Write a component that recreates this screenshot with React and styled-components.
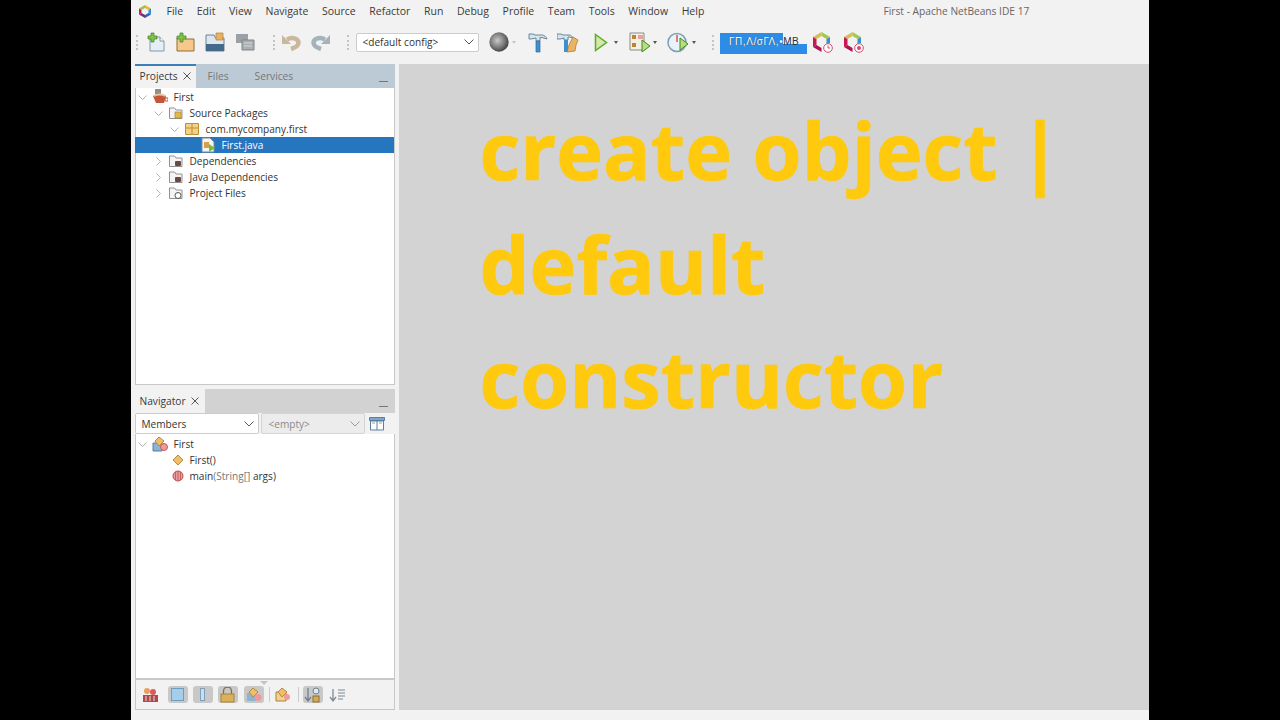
import React from 'react';
import styled, { createGlobalStyle } from 'styled-components';

const Global = createGlobalStyle`
  html, body { margin: 0; padding: 0; background: #000; height: 720px; overflow: hidden; }
  #root { height: 720px; }
`;
const Stage = styled.div`
  width: 1280px; height: 720px; background: #000; display: flex; justify-content: center;
`;
const Win = styled.div`
  width: 1018px; margin-left: -1px; height: 720px; background: #f2f2f2; display: flex; flex-direction: column;
  font-family: "Open Sans", "Noto Sans", sans-serif; font-size: 10.1px; color: #333;
`;
const TitleBar = styled.div`
  height: 22px; display: flex; align-items: center; position: relative; padding-left: 7px;
`;
const Menu = styled.div`display: flex; margin-left: 15px; gap: 13.6px;`;
const MenuItem = styled.span`font-size: 10.5px; color: #3a3a3a;`;
const WinTitle = styled.span`position: absolute; left: 753px; font-size: 10.2px; color: #666; top: 4px;`;
const ToolBar = styled.div`
  height: 42px; box-sizing: border-box; padding: 0 0 2px 5px; display: flex; align-items: center;
`;
const Grip = styled.div`
  width: 1px; height: 15px; flex: none; margin: 0 ${p => p.$r ?? 0}px 0 ${p => p.$l ?? 0}px; border-left: 2px dotted #c4c4c4;
`;
const Ico = styled.svg`flex: none; display: block; margin-left: ${p => p.$ml || 0}px;`;
const Drop = styled.span`
  width: 0; height: 0; flex: none; margin-left: ${p => p.$ml ?? 5}px;
  border-left: 2.5px solid transparent; border-right: 2.5px solid transparent; border-top: 3px solid ${p => p.$c || '#555'};
`;
const Config = styled.div`
  width: 123px; height: 19px; box-sizing: border-box; background: #fff; border: 1px solid #ccc; border-radius: 2px;
  display: flex; align-items: center; justify-content: space-between; padding: 0 4px 0 6px; font-size: 10.1px; color: #333; flex: none;
`;
const Mem = styled.div`
  width: 87px; height: 21px; margin-top: 3px; flex: none; box-sizing: border-box; padding: 1px 0 0 9px; color: #fff; line-height: 16px;
  font-family: "Liberation Sans", sans-serif; font-size: 10px; letter-spacing: 0.55px; white-space: nowrap;
  text-shadow: 0 0 1px #234;
  background:
    linear-gradient(#2f8ce6, #2f8ce6) left top / 63px 100% no-repeat,
    linear-gradient(#2f8ce6, #2f8ce6) left bottom / 100% 10px no-repeat;
`;
const MemDark = styled.span`color: #27323c; text-shadow: none;`;
const Body = styled.div`flex: 1; display: flex; padding: 0 0 10px 4px; min-height: 0; gap: 4px; background: #f2f2f2;`;
const Left = styled.div`width: 260px; flex: none; display: flex; flex-direction: column; gap: 4px;`;
const Panel = styled.div`
  display: flex; flex-direction: column; flex: ${p => p.$grow}; min-height: 0;
`;
const TabBar = styled.div`
  height: 24px; flex: none; display: flex; background: ${p => p.$bg}; position: relative;
`;
const Tab = styled.div`
  height: 100%; box-sizing: border-box; display: flex; align-items: center; gap: 5px; padding: 0 ${p => p.$pr ?? 5}px ${p => p.$blue ? 2 : 0}px ${p => p.$pl ?? 5}px;
  font-size: 10.2px; color: #3a3a3a;
  background: ${p => p.$active ? '#f2f2f2' : 'transparent'};
  border-top: ${p => p.$blue ? '2px solid #3d80b8' : 'none'};
`;
const Minimize = styled.span`position: absolute; right: 7px; bottom: 6px; width: 9px; height: 1px; background: #777;`;
const TreeBox = styled.div`
  flex: 1; background: #fff; border: 1px solid #c8c8c8; border-top: none; min-height: 0; padding-top: 1px;
`;
const Row = styled.div`
  height: 16px; display: flex; align-items: center; padding-left: ${p => p.$pad}px; font-size: 10.1px;
  color: ${p => p.$sel ? '#fff' : '#333'}; background: ${p => p.$sel ? '#2675bf' : 'transparent'};
  margin-left: ${p => p.$sel ? -1 : 0}px;
`;
const Twist = styled.svg`width: 9px; height: 9px; flex: none; margin-right: 5px;`;
const RowIcon = styled.svg`width: 16px; height: 16px; flex: none; margin-right: ${p => p.$mr ?? 6}px;`;
const Faded = styled.span`color: #777;`;
const Combos = styled.div`display: flex; height: 21px; align-items: center; gap: 2px; background: #f2f2f2; flex: none;`;
const Combo = styled.div`
  height: 21px; width: ${p => p.$w}px; box-sizing: border-box; flex: none; border: 1px solid ${p => p.$off ? '#d4d4d4' : '#ccc'};
  background: ${p => p.$off ? '#ececec' : '#fff'}; color: ${p => p.$off ? '#8a8a8a' : '#333'}; border-radius: 2px;
  display: flex; align-items: center; justify-content: space-between; padding: 0 4px 0 ${p => p.$off ? 7 : 6}px; font-size: 10.1px;
`;
const NavBox = styled(TreeBox)`padding-top: 2px;`;
const Bottom = styled.div`
  height: 29px; flex: none; background: #f2f2f2; border: 1px solid #c8c8c8; display: flex; align-items: center; padding-left: 5px; position: relative;
`;
const Notch = styled.span`
  position: absolute; top: 1px; left: 124px; border-left: 4px solid transparent; border-right: 4px solid transparent; border-top: 4px solid #c4c4c4;
`;
const FilterBtn = styled.div`
  width: 20px; height: 17px; margin-right: ${p => p.$mr ?? 5}px; flex: none; display: flex; align-items: center; justify-content: center; border-radius: 3px;
  background: ${p => p.$on ? '#c8c8c8' : 'transparent'};
`;
const Sep = styled.div`width: 1px; height: 15px; background: #ccc; margin-right: ${p => p.$mr}px; flex: none;`;
const Editor = styled.div`
  flex: 1; background: #d3d3d3; padding: 28px 60px 0 81px; min-width: 0;
`;
const Headline = styled.h1`
  margin: 0; font-family: "Open Sans", "Noto Sans", sans-serif; font-weight: 700; font-size: 79.2px; line-height: 114px; color: #ffc90e;
  -webkit-text-stroke: 0.7px #ffc90e;
`;

const Chev = ({ open, c = '#a8a8a8' }) => (
  <Twist viewBox="0 0 9 9">
    <path d={open ? 'M0.5 2.5 L4.5 6.5 L8.5 2.5' : 'M2.5 0.5 L6.5 4.5 L2.5 8.5'} fill="none" stroke={c} strokeWidth="0.9" />
  </Twist>
);
const ComboChev = ({ c = '#555' }) => (
  <svg width="10" height="6" viewBox="0 0 10 6"><path d="M0.5 0.5 L5 5 L9.5 0.5" fill="none" stroke={c} strokeWidth="1" /></svg>
);
const Folder = ({ badge }) => (
  <RowIcon viewBox="0 0 16 16">
    <path d="M1.500 3h5l1.500 2h6v8.500h-12.500z" fill="#f4f4f4" stroke="#8d9297" strokeWidth="1" />
    {badge}
  </RowIcon>
);
const BadgeCube = ({ children }) => (
  <Ico $ml={0} width="22" height="22" viewBox="0 0 22 22">
    <path d="M10.500 1L19 6l-3.500 2-5-3z" fill="#a5c84f" />
    <path d="M2 6l8.500-5v4l-5 3z" fill="#d3bf58" />
    <path d="M2 6v10l3.500-2V8z" fill="#c7184f" />
    <path d="M2 16l8.500 5v-4l-5-3z" fill="#a8174e" />
    <path d="M19 6v6l-3.500 1V8z" fill="#3d8fd0" />
    {children}
  </Ico>
);
const Cross = () => (
  <svg width="8" height="8" viewBox="0 0 8 8"><path d="M.5.5l7 7M7.500.5l-7 7" stroke="#555" strokeWidth="1" /></svg>
);

export default function App() {
  const menus = ['File','Edit','View','Navigate','Source','Refactor','Run','Debug','Profile','Team','Tools','Window','Help'];
  return (
    <Stage>
      <Global />
      <Win>
        <TitleBar>
          <Ico width="14" height="15" viewBox="0 0 14 15">
            <path d="M7 1L13 4.500 10.500 6 7 4z" fill="#e8b52c" />
            <path d="M1 4.500L7 1V4L3.500 6z" fill="#9cc24c" />
            <path d="M1 4.500V10.500L3.500 9V6z" fill="#c7184f" />
            <path d="M1 10.500L7 14V11L3.500 9z" fill="#7b2c80" />
            <path d="M13 4.500V10.500L10.500 9V6z" fill="#2a8fd9" />
            <path d="M13 10.500L7 14V11L10.500 9z" fill="#2a66b8" />
          </Ico>
          <Menu>{menus.map(m => <MenuItem key={m}>{m}</MenuItem>)}</Menu>
          <WinTitle>First - Apache NetBeans IDE 17</WinTitle>
        </TitleBar>
        <ToolBar>
          <Grip />
          <Ico $ml={7} width="20" height="20" viewBox="0 0 20 20">
            <path d="M4 5h10l4 4v10H4z" fill="#e6eff5" stroke="#7f99a8" />
            <path d="M14 5v4h4" fill="#fff" stroke="#7f99a8" />
            <path d="M5 1h3v3h3v3H8v3H5V7H2V4h3z" fill="#7ec24a" stroke="#3f7f2a" strokeWidth=".7" />
          </Ico>
          <Ico $ml={9} width="20" height="20" viewBox="0 0 20 20">
            <path d="M2 6h7l1.500 1H19v12H2z" fill="#f6c98b" stroke="#8f6f35" />
            <path d="M5 1h3v3h3v3H8v3H5V7H2V4h3z" fill="#7ec24a" stroke="#3f7f2a" strokeWidth=".7" />
          </Ico>
          <Ico $ml={10} width="20" height="20" viewBox="0 0 20 20">
            <path d="M1 3h8l1.500 3H19v13H1z" fill="#dce6ee" stroke="#6b8296" />
            <path d="M1 12h18v7H1z" fill="#44698a" />
            <path d="M11 1h7v7h-7z" fill="#eeb061" stroke="#a8843a" strokeWidth=".7" />
          </Ico>
          <Ico $ml={10} width="20" height="20" viewBox="0 0 20 20">
            <path d="M1 2h12v9H1z" fill="#9aa0a5" /><path d="M7 8h12v10H7z" fill="#a9aeb2" stroke="#808488" />
            <path d="M9 11h8M9 14h8" stroke="#d8d8d8" />
          </Ico>
          <Grip $l={18} $r={4} />
          <Ico width="22" height="20" viewBox="0 0 22 20">
            <path d="M7 7.500C13 4 20 7.500 18 12.500 17 15 14 16 11 17" fill="none" stroke="#c9b89c" strokeWidth="4.500" />
            <path d="M2 3v9h9z" fill="#c9b89c" />
          </Ico>
          <Ico $ml={8} width="22" height="20" viewBox="0 0 22 20">
            <path d="M15 7.500C9 4 2 7.500 4 12.500 5 15 8 16 11 17" fill="none" stroke="#a3b3bb" strokeWidth="4.500" />
            <path d="M20 3v9h-9z" fill="#a3b3bb" />
          </Ico>
          <Grip $l={15} $r={6} />
          <Config>&lt;default config&gt;<ComboChev /></Config>
          <Ico $ml={10} width="20" height="20" viewBox="0 0 20 20">
            <defs><radialGradient id="g" cx=".42" cy=".42" r=".62"><stop offset="0" stopColor="#c9c9c9" /><stop offset=".6" stopColor="#7a7a7a" /><stop offset="1" stopColor="#3d3d3d" /></radialGradient></defs>
            <circle cx="10" cy="10" r="9.700" fill="url(#g)" />
          </Ico>
          <Drop $ml={3.5} $c="#c8c8c8" />
          <Ico $ml={11.5} width="20" height="21" viewBox="0 0 20 21">
            <path d="M1 2h4l2 1h7c2 0 4 1.500 5 4l-5-1.500h-2V9H8V6L3 7H1z" fill="#d6e6ef" stroke="#5b7a8e" strokeWidth=".9" />
            <path d="M8 9h4v11H8z" fill="#3f8fd0" stroke="#2c6a9c" strokeWidth=".7" />
          </Ico>
          <Ico $ml={9} width="22" height="21" viewBox="0 0 22 21">
            <path d="M0 2h4l2 1h6c2 0 3 1 4 3l-4-1h-1v3H7V6L3 7H0z" fill="#d6e6ef" stroke="#5b7a8e" strokeWidth=".9" />
            <path d="M7 8h4v12H7z" fill="#3f8fd0" />
            <path d="M16 5l5 3-2 5-1 6-8 1 2-7z" fill="#eab563" stroke="#a87c38" strokeWidth=".8" />
          </Ico>
          <Ico $ml={15} width="14" height="19" viewBox="0 0 14 19">
            <path d="M1.500 1.500L12.500 9.500 1.500 17.500z" fill="#d4e8a8" stroke="#5dab2c" strokeWidth="1.500" />
          </Ico>
          <Drop $ml={6} />
          <Ico $ml={11} width="22" height="20" viewBox="0 0 22 20">
            <path d="M1 1h14v17H1z" fill="#f2efe3" stroke="#8a8a8a" />
            <path d="M3 3h4v4H3zM3 11h4v4H3z" fill="#b9853a" /><path d="M9 3h5v4H9z" fill="#e6a0a0" />
            <path d="M13 8l8 6-8 6z" fill="#b5de7c" stroke="#3f8a22" />
          </Ico>
          <Drop $ml={2} />
          <Ico $ml={10} width="22" height="21" viewBox="0 0 22 21">
            <circle cx="10" cy="10.500" r="9" fill="#e8f2f8" stroke="#7d9fb6" strokeWidth="1.500" />
            <path d="M10 3v7" stroke="#d45a4a" strokeWidth="1.500" />
            <path d="M13 6l8 6-8 6z" fill="#b5de7c" stroke="#3f8a22" />
          </Ico>
          <Drop $ml={3.5} />
          <Grip $l={16} $r={5} />
          <Mem>ΓΠ,Λ/σΓΛ,•<MemDark>MB</MemDark></Mem>
          <Ico as="span" $ml={4}><BadgeCube>
            <circle cx="17" cy="17" r="4.300" fill="#fff" stroke="#d6496a" /><path d="M17 14.500V17h2" fill="none" stroke="#d6496a" />
          </BadgeCube></Ico>
          <Ico as="span" $ml={9}><BadgeCube>
            <circle cx="17" cy="17" r="4.300" fill="#fff" stroke="#d6496a" /><circle cx="17" cy="17" r="2" fill="#d6496a" />
          </BadgeCube></Ico>
        </ToolBar>
        <Body>
          <Left>
            <Panel $grow="0 0 321px">
              <TabBar $bg="#bccad6">
                <Tab $active $blue $pr={5}>Projects<Cross /></Tab>
                <Tab $pl={12} $pr={14}><Faded>Files</Faded></Tab>
                <Tab $pl={12}><Faded>Services</Faded></Tab>
                <Minimize />
              </TabBar>
              <TreeBox>
                <Row $pad={2}><Chev open />
                  <RowIcon viewBox="0 0 16 16"><path d="M3 0h6v5H3z" fill="#8f8f8f" /><path d="M1 7c4-3 9-3 13 0l-2 7H4z" fill="#c2573a" /><path d="M2 7c3-2 8-2 11 0" stroke="#efc4a0" strokeWidth="2" fill="none" /><path d="M13 9h3v3h-3z" fill="none" stroke="#c2573a" /></RowIcon>First
                </Row>
                <Row $pad={18}><Chev open />
                  <Folder badge={<rect x="7" y="7" width="6" height="6" fill="#e3b94e" stroke="#a98623" strokeWidth=".7" />} />Source Packages
                </Row>
                <Row $pad={34}><Chev open />
                  <RowIcon viewBox="0 0 16 16"><path d="M1.500 2.500h13v11h-13z" fill="#f2d18a" stroke="#c09030" /><path d="M1.500 7h13M8 2.500v11" stroke="#c09030" /></RowIcon>com.mycompany.first
                </Row>
                <Row $pad={65} $sel>
                  <RowIcon $mr={6} viewBox="0 0 16 16"><path d="M2 1h8l4 4v10H2z" fill="#f4f4f4" stroke="#7f8c96" /><path d="M4 5h5v6H4z" fill="#d4a04a" /><path d="M9 7l6 4-6 4z" fill="#6ec23c" /></RowIcon>First.java
                </Row>
                <Row $pad={18}><Chev />
                  <Folder badge={<rect x="7" y="8" width="6" height="5" rx="1" fill="#6b4a44" />} />Dependencies
                </Row>
                <Row $pad={18}><Chev />
                  <Folder badge={<rect x="7" y="8" width="6" height="5" rx="1" fill="#6b4a44" />} />Java Dependencies
                </Row>
                <Row $pad={18}><Chev />
                  <Folder badge={<circle cx="10" cy="10.500" r="3" fill="#fff" stroke="#555" />} />Project Files
                </Row>
              </TreeBox>
            </Panel>
            <Panel $grow="1">
              <TabBar $bg="#d2d2d2">
                <Tab $active $pr={6}>Navigator<Cross /></Tab>
                <Minimize />
              </TabBar>
              <Combos>
                <Combo $w={124}>Members<ComboChev /></Combo>
                <Combo $w={104} $off>&lt;empty&gt;<ComboChev c="#999" /></Combo>
                <Ico $ml={2} width="16" height="15" viewBox="0 0 16 15">
                  <path d="M.5 1.500h15v3H.5z" fill="#7fa6c9" stroke="#5d7f9d" /><path d="M1.500 5h13v9h-13z" fill="#fff" stroke="#5d7f9d" /><path d="M8 5v9" stroke="#5d7f9d" /><path d="M3 7h3M10 7h3" stroke="#7fa6c9" />
                </Ico>
              </Combos>
              <NavBox>
                <Row $pad={2}><Chev open />
                  <RowIcon viewBox="0 0 16 16"><path d="M1 7h9v8H1z" fill="#8ab4d4" stroke="#5d7f9d" /><path d="M7 1l5 4-5 5-4-5z" fill="#f0bd6a" stroke="#b98a3a" /><circle cx="12" cy="11" r="3.500" fill="#ee9a9a" stroke="#c45a5a" /></RowIcon>First
                </Row>
                <Row $pad={34}>
                  <RowIcon $mr={4} viewBox="0 0 16 16"><path d="M8 3l5 5-5 5-5-5z" fill="#f0bd6a" stroke="#b98a3a" /></RowIcon>First()
                </Row>
                <Row $pad={34}>
                  <RowIcon $mr={4} viewBox="0 0 16 16"><circle cx="8" cy="8" r="5" fill="#ea9d9d" stroke="#c05050" /><path d="M8 3v10M5.500 4v8M10.500 4v8" stroke="#b84a4a" strokeWidth=".7" /></RowIcon>main<Faded>(String[]</Faded>&nbsp;args)
                </Row>
              </NavBox>
              <Bottom>
                <Notch />
                <FilterBtn $mr={7}><svg width="17" height="16" viewBox="0 0 17 16"><circle cx="5" cy="4" r="3" fill="#e8a060" /><circle cx="11" cy="5" r="3" fill="#dd5a5a" /><path d="M1 8h15v7H1z" fill="#b04a4a" /><path d="M4 9v5M8 9v5M12 9v5" stroke="#fff" strokeWidth=".8" /></svg></FilterBtn>
                <FilterBtn $on><svg width="13" height="13" viewBox="0 0 13 13"><rect x=".5" y=".5" width="12" height="12" fill="#a5cdec" stroke="#6f9dbf" /></svg></FilterBtn>
                <FilterBtn $on><svg width="5" height="13" viewBox="0 0 5 13"><rect x=".5" y=".5" width="4" height="12" fill="#c5dff0" stroke="#7fa0b8" /></svg></FilterBtn>
                <FilterBtn $on $mr={6}><svg width="15" height="16" viewBox="0 0 15 16"><path d="M3.500 7V4a4 4 0 018 0v3" fill="none" stroke="#8a6f3a" strokeWidth="1.300" /><rect x="1" y="7" width="13" height="8" fill="#dcb05a" stroke="#a8843a" /></svg></FilterBtn>
                <FilterBtn $on><svg width="16" height="15" viewBox="0 0 16 15"><path d="M1 6h9v8H1z" fill="#8ab4d4" /><path d="M7 1l5 4-5 5-4-5z" fill="#f0bd6a" stroke="#b98a3a" /><circle cx="12" cy="10.500" r="3.500" fill="#ee9a9a" /></svg></FilterBtn>
                <Sep $mr={3} />
                <FilterBtn><svg width="16" height="15" viewBox="0 0 16 15"><path d="M1 5h10v9H1z" fill="#f0d28a" stroke="#a8843a" /><path d="M7 1l5 4-5 5-4-5z" fill="#f0bd6a" stroke="#b98a3a" /><circle cx="12" cy="10" r="3" fill="#ee9a9a" /></svg></FilterBtn>
                <Sep $mr={4} />
                <FilterBtn $on><svg width="17" height="16" viewBox="0 0 17 16"><path d="M4 1v12M1 10l3 4 3-4" fill="none" stroke="#6f8090" strokeWidth="1.300" /><circle cx="12" cy="4" r="3" fill="#dfe8ee" stroke="#6f8090" /><rect x="9" y="9" width="6" height="6" fill="#d9a84f" stroke="#8a6f3a" /></svg></FilterBtn>
                <FilterBtn><svg width="17" height="16" viewBox="0 0 17 16"><path d="M4 2v11M1 10l3 4 3-4" fill="none" stroke="#7b8b99" strokeWidth="1.300" /><path d="M9 3h7M9 6h7M9 9h7M9 12h5" stroke="#a0acb5" strokeWidth="1.600" /></svg></FilterBtn>
              </Bottom>
            </Panel>
          </Left>
          <Editor>
            <Headline>create object | default constructor</Headline>
          </Editor>
        </Body>
      </Win>
    </Stage>
  );
}
